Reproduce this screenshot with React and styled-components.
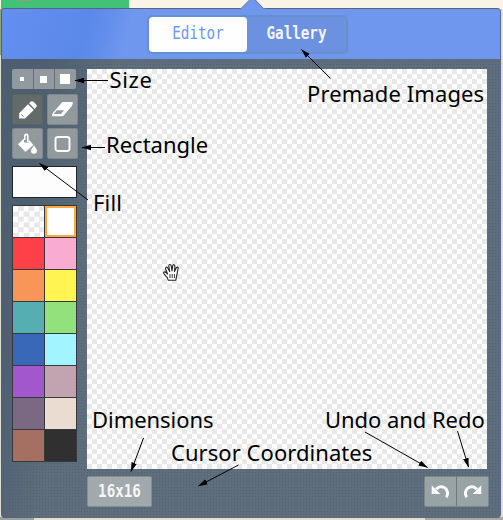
import React from "react";
import styled, { createGlobalStyle, css } from "styled-components";

const GlobalStyle = createGlobalStyle`
  * { box-sizing: border-box; }
  body { margin: 0; width: 503px; height: 520px; overflow: hidden; background: #e9e2d4; }
  button { padding: 0; margin: 0; border: 0; font: inherit; color: inherit; }
`;

const checker = css`
  background-color: #fdfdfd;
  background-image: conic-gradient(#e8e8e8 25%, transparent 0 50%, #e8e8e8 0 75%, transparent 0);
`;

const Page = styled.main`
  position: relative;
  width: 503px;
  height: 520px;
  padding: 8px 2px 2px 1px;
  overflow: hidden;
  background:
    linear-gradient(#b08f7c, #8fa37c) 18px 0 / 14px 1px no-repeat,
    linear-gradient(#41c277, #41c277) 1px 0 / 128px 9px no-repeat,
    linear-gradient(#88a87c, #88a87c) 0 9px / 2px 46px no-repeat,
    linear-gradient(#9ba1a0, #9ba1a0) 0 517px / 34px 3px no-repeat,
    linear-gradient(#aaa9a6, #aaa9a6) 425px 517px / 78px 3px no-repeat,
    linear-gradient(#f9f4e6, #f9f4e6) 0 0 / 503px 9px no-repeat,
    #e5ded0;
`;

const Pointer = styled.svg`
  position: absolute;
  left: 240px;
  top: 0;
`;

const Window = styled.section`
  height: 510px;
  display: flex;
  flex-direction: column;
  border-radius: 4px;
  overflow: hidden;
  border-top: 1px solid #54657c;
  border-left: 1px solid #4f6075;
  border-right: 1px solid #596b84;
  background:
    radial-gradient(circle, #52616f 0.6px, transparent 0.8px) 0 0 / 3px 3px,
    linear-gradient(100deg, #4b5d6e 0, #4d5f70 60px, #5f6e7c 125px);
`;

const Header = styled.header`
  height: 50px;
  flex: none;
  display: flex;
  justify-content: center;
  align-items: center;
  padding-right: 7px;
  background: linear-gradient(105deg, #648ff0 0, #5b89e9 86px, #628dec 105px, #7097ee 128px);
`;

const Tabs = styled.nav`
  display: flex;
  height: 39px;
  border: 2px solid #668fce;
  border-radius: 5px;
  background: #6c91e0;
`;

const Tab = styled.button`
  width: ${(p) => (p.$active ? 98 : 99)}px;
  border-radius: 4px;
  background: ${(p) => (p.$active ? "#fefefe" : "transparent")};
  color: ${(p) => (p.$active ? "#6f96ed" : "#f5f6f2")};
  font: ${(p) => (p.$active ? 400 : 700)} 15px/35px "DejaVu Sans Mono", monospace;
`;

const NarrowText = styled.span`
  display: block;
  transform: translateY(-0.5px) scale(0.95, 1.12);
`;

const Body = styled.div`
  flex: 1;
  display: grid;
  grid-template-columns: 65px 400px;
  column-gap: 10px;
  padding: 10px 0 0 10px;
`;

const Sidebar = styled.aside`
  display: flex;
  flex-direction: column;
`;

const SizeGroup = styled.div`
  width: 64px;
  height: 20px;
  display: flex;
  gap: 1px;
  overflow: hidden;
  border-radius: 2px;
  background: #667076;
`;

const SizeButton = styled.button`
  flex: 1;
  display: grid;
  place-items: center;
  background: #929a9f;
  &::before {
    content: "";
    width: ${(p) => p.$dot}px;
    height: ${(p) => p.$dot}px;
    margin-right: 1px;
    background: #fff;
  }
`;

const ToolGrid = styled.div`
  display: grid;
  grid-template-columns: 31px 31px;
  grid-auto-rows: 31px;
  gap: 3px 4px;
  margin-top: 5px;
`;

const ToolButton = styled.button`
  display: grid;
  place-items: center;
  border-radius: 2px;
  border: 1px solid ${(p) => (p.$active ? "#59625f" : "#7e878b")};
  background: ${(p) => (p.$active ? "#626b69" : "#92999d")};
`;

const CurrentColor = styled.div`
  width: 65px;
  height: 32px;
  margin-top: 7px;
  border: 1px solid #222528;
  background: #fdfdfd;
`;

const Palette = styled.div`
  width: 65px;
  margin-top: 7px;
  display: grid;
  grid-template-columns: 31px 31px;
  grid-auto-rows: 31px;
  gap: 1px;
  padding: 1px;
  background: #36393b;
`;

const Swatch = styled.button`
  background: ${(p) => p.$color};
  ${(p) => p.$empty && css`${checker} background-size: 10.66px 10.66px;`}
  ${(p) => p.$selected && css`border: 2px solid #ffa940;`}
`;

const Workspace = styled.div`
  display: flex;
  flex-direction: column;
`;

const Canvas = styled.div`
  height: 400px;
  ${checker}
  background-size: 10px 10px;
`;

const Footer = styled.footer`
  margin-top: 7px;
  display: flex;
  justify-content: space-between;
`;

const SizeBadge = styled.button`
  width: 65px;
  height: 31px;
  border: 1px solid #858d91;
  border-radius: 2px;
  background: #a2a9ad;
  color: #f6f6f6;
  font: 700 15px/31px "DejaVu Sans Mono", monospace;
`;

const History = styled.div`
  width: 65px;
  height: 31px;
  margin-right: -2px;
  display: flex;
  gap: 1px;
  border: 1px solid #7d888b;
  border-radius: 2px;
  background: #6d787b;
`;

const HistoryButton = styled.button`
  flex: 1;
  display: grid;
  place-items: center;
  background: #97a3a4;
`;

const Overlay = styled.svg`
  position: absolute;
  left: 0;
  top: 0;
  pointer-events: none;
`;

const Label = styled.span`
  position: absolute;
  left: ${(p) => p.$x}px;
  top: ${(p) => p.$y}px;
  color: #000;
  font: 22px/26px "Noto Sans", sans-serif;
  letter-spacing: ${(p) => p.$track || 0}px;
  white-space: nowrap;
`;

const PencilIcon = () => (
  <svg width="20" height="20" viewBox="0 0 20 20">
    <path d="M1.2 13.2 10 4.2 15.8 10 7 18.6H1.2Z M11.1 3.2 12.8 1.6Q14.2.7 15.6 1.7L18.2 4.4Q19.3 5.8 18.3 7.1L16.7 8.9Z" fill="#fff" />
    <path d="M3.2 14.4 5.4 16.6" stroke="#626b69" strokeWidth="1" />
  </svg>
);

const EraserIcon = () => (
  <svg width="23" height="19" viewBox="0 0 23 19">
    <path fillRule="evenodd" fill="#fff" d="M12 2H21Q22.4 2 21.7 3.8L20.8 6 12.7 15.4Q12 16.2 10.8 16.2H2Q.6 16.2 1.2 14.4L2 12.8 10.5 3Q11.2 2 12 2ZM5.7 10.2 2.8 14.1H9.9L13.2 10.2Z" />
  </svg>
);

const BucketIcon = () => (
  <svg width="22" height="22" viewBox="0 0 22 22">
    <path d="M7.8 7V3Q7.8 1.4 9.3 1.4T10.8 3V9" fill="none" stroke="#fff" strokeWidth="1.6" />
    <path d="M7 5.5 1 11.3 8.5 19 16.4 12 11.8 6.6V9.4H7Z" fill="#fff" />
    <path d="M17 12.2C15.8 14.7 14 16 14 17.8A3 3 0 0 0 20 17.8C20 16 18.2 14.7 17 12.2Z" fill="#fff" />
  </svg>
);

const RectangleIcon = () => (
  <svg width="18" height="18" viewBox="0 0 18 18">
    <rect x="1.5" y="2" width="14" height="14" rx="2.5" fill="none" stroke="#fff" strokeWidth="1.9" />
  </svg>
);

const UndoIcon = ({ flip }) => (
  <svg width="20" height="17" viewBox="0 0 20 17">
    <g transform={flip ? "translate(19 0) scale(-1 1)" : undefined}>
      <path d="M5.2 6.2A6.2 6.2 0 1 1 15.2 14.2" fill="none" stroke="#fff" strokeWidth="3" />
      <path d="M.7 2.2V11H9.3Z" fill="#fff" />
    </g>
  </svg>
);

const colors = [
  "#fe4148", "#f9abd2", "#f89559", "#fff452", "#55afb2", "#93e17c", "#3968b8",
  "#a2f4ff", "#a258cc", "#c1a4b0", "#7b6983", "#ebdcd2", "#a56f61", "#303030",
];

const arrows = [
  [108, 80.5, 75, 80.5], [105, 147.5, 82, 147.5], [88, 200, 39.5, 163.5],
  [330.5, 78.5, 301.5, 49.5], [143.5, 438, 131, 471.5], [238.5, 465, 198.5, 486],
  [365, 432, 427.5, 467.5], [457.5, 431, 468.5, 467],
];

const labels = [
  ["Size", 109.5, 66, 0.6], ["Premade Images", 307, 80, 0.1], ["Rectangle", 106, 131],
  ["Fill", 93, 189, 0.2], ["Dimensions", 92, 406, -0.05], ["Undo and Redo", 325, 406, -0.05],
  ["Cursor Coordinates", 171, 439, 0.05],
];

export default function App() {
  return (
    <Page>
      <GlobalStyle />
      <Window>
        <Header>
          <Tabs>
            <Tab $active><NarrowText>Editor</NarrowText></Tab>
            <Tab><NarrowText>Gallery</NarrowText></Tab>
          </Tabs>
        </Header>
        <Body>
          <Sidebar>
            <SizeGroup>
              <SizeButton $dot={4} aria-label="Small" />
              <SizeButton $dot={7} aria-label="Medium" />
              <SizeButton $dot={10} aria-label="Large" />
            </SizeGroup>
            <ToolGrid>
              <ToolButton $active aria-label="Pencil"><PencilIcon /></ToolButton>
              <ToolButton aria-label="Eraser"><EraserIcon /></ToolButton>
              <ToolButton aria-label="Fill"><BucketIcon /></ToolButton>
              <ToolButton aria-label="Rectangle"><RectangleIcon /></ToolButton>
            </ToolGrid>
            <CurrentColor />
            <Palette>
              <Swatch $empty />
              <Swatch $color="#fefefe" $selected />
              {colors.map((c) => <Swatch key={c} $color={c} />)}
            </Palette>
          </Sidebar>
          <Workspace>
            <Canvas />
            <Footer>
              <SizeBadge><NarrowText>16x16</NarrowText></SizeBadge>
              <History>
                <HistoryButton aria-label="Undo"><UndoIcon /></HistoryButton>
                <HistoryButton aria-label="Redo"><UndoIcon flip /></HistoryButton>
              </History>
            </Footer>
          </Workspace>
        </Body>
      </Window>
      <Pointer width="26" height="10">
        <path d="M0 10 1 8.5 9.5 0H16L24.5 9V10Z" fill="#7097ee" />
        <path d="M0 8.5H1L9.5 0M15 0 23.5 8.5H26" fill="none" stroke="#667b9b" />
      </Pointer>
      <Overlay width="503" height="520">
        <defs>
          <marker id="head" markerWidth="10" markerHeight="6" refX="9" refY="3" orient="auto" markerUnits="userSpaceOnUse">
            <path d="M0 .2 9.5 3 0 5.8Z" fill="#000" />
          </marker>
        </defs>
        {arrows.map(([x1, y1, x2, y2]) => (
          <line key={`${x1}-${y1}`} x1={x1} y1={y1} x2={x2} y2={y2} stroke="#000" markerEnd="url(#head)" />
        ))}
        <g transform="translate(163 263)">
          <path d="M5.2 17.2 4.4 14.8 1.2 11.2Q.2 9.6 1.2 9T3.4 9.8L4.6 11 2.6 6.2Q2.2 4.6 3.2 4.2T5 5.4L6.7 8.6 5.8 3.2Q5.7 1.6 6.8 1.5T8.2 2.8L9 8 9.7 2.8Q10 1.4 11 1.7T11.9 3.2L11.5 8.4 13.2 4.9Q14 3.7 14.8 4.3T15 6L13.8 12.2 12.8 17.2Z" fill="#fff" stroke="#222" strokeWidth="1.1" strokeLinejoin="round" />
          <path d="M7 11V15M9.2 11V15M11.4 11V15" stroke="#222" strokeWidth=".9" />
        </g>
      </Overlay>
      {labels.map(([text, x, y, t]) => <Label key={text} $x={x} $y={y} $track={t}>{text}</Label>)}
    </Page>
  );
}
